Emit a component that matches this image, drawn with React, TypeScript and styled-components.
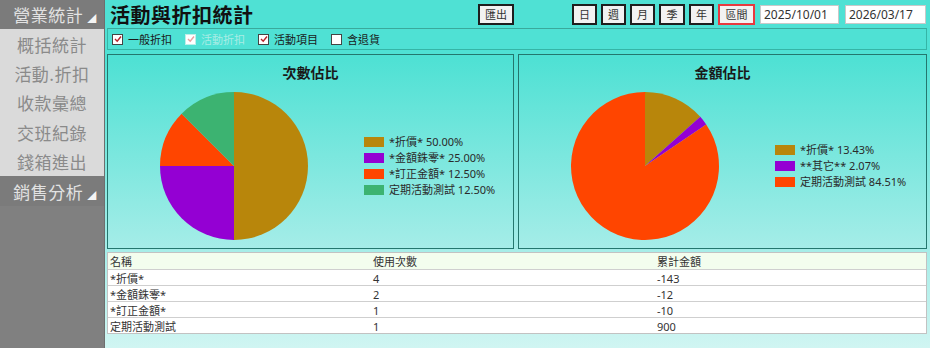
import styled, { createGlobalStyle } from "styled-components"

const GlobalStyle = createGlobalStyle`
  html, body {
    margin: 0;
    padding: 0;
    overflow: hidden;
  }
  body {
    font-family: "Noto Sans", "Noto Sans CJK TC", sans-serif;
  }
`

interface Slice {
  label: string
  value: number
  color: string
}

const countSlices: Slice[] = [
  { label: "*折價* 50.00%", value: 50, color: "#b8860b" },
  { label: "*金額銖零* 25.00%", value: 25, color: "#9400d3" },
  { label: "*訂正金額* 12.50%", value: 12.5, color: "#ff4500" },
  { label: "定期活動測試 12.50%", value: 12.5, color: "#3cb371" },
]

const amountSlices: Slice[] = [
  { label: "*折價* 13.43%", value: 13.43, color: "#b8860b" },
  { label: "**其它** 2.07%", value: 2.07, color: "#9400d3" },
  { label: "定期活動測試 84.51%", value: 84.51, color: "#ff4500" },
]

const rows = [
  { name: "*折價*", count: "4", total: "-143" },
  { name: "*金額銖零*", count: "2", total: "-12" },
  { name: "*訂正金額*", count: "1", total: "-10" },
  { name: "定期活動測試", count: "1", total: "900" },
]

const menu = [
  { text: "營業統計", head: true },
  { text: "概括統計" },
  { text: "活動.折扣" },
  { text: "收款彙總" },
  { text: "交班紀錄" },
  { text: "錢箱進出" },
  { text: "銷售分析", head: true },
]

const periods = ["日", "週", "月", "季", "年"]

const Page = styled.div`
  display: flex;
  width: 930px;
  height: 348px;
`

const Sidebar = styled.div`
  width: 104px;
  flex-shrink: 0;
  background: #808080;
  border-right: 1px solid #6e6e6e;
  display: flex;
  flex-direction: column;
`

const MenuItem = styled.div<{ $head?: boolean }>`
  height: 29.4px;
  display: flex;
  align-items: center;
  justify-content: center;
  gap: 4px;
  font-family: "Noto Sans CJK TC", sans-serif;
  font-size: 17px;
  letter-spacing: 0.5px;
  background: ${(p) => (p.$head ? "#7b7b7b" : "#dadada")};
  color: ${(p) => (p.$head ? "#e2e2e2" : "#8a8a8a")};
  padding-left: ${(p) => (p.$head ? "6px" : "0")};
`

const Corner = styled.span`
  font-size: 9px;
  color: #f4f4f4;
  margin-top: 8px;
`

const Main = styled.div`
  flex: 1;
  min-width: 0;
  display: flex;
  flex-direction: column;
  background: linear-gradient(
    to bottom,
    #4fe1d4 0px,
    #4fe1d4 60px,
    #a6ede8 250px,
    #d0f5f2 348px
  );
`

const Header = styled.div`
  height: 28px;
  display: flex;
  align-items: center;
  padding: 0 4px 0 5px;
`

const Title = styled.h1`
  margin: 0;
  font-family: "Noto Sans CJK TC", sans-serif;
  font-size: 20px;
  font-weight: 700;
  color: #111;
  letter-spacing: 0.5px;
  width: 368px;
`

const Btn = styled.button<{ $active?: boolean; $w: number }>`
  width: ${(p) => p.$w}px;
  height: 21px;
  padding: 0;
  margin-right: 4px;
  background: #f2f2f2;
  border: 2px solid ${(p) => (p.$active ? "#e8393f" : "#1e1e1e")};
  font-family: "Noto Sans CJK TC", sans-serif;
  font-size: 11px;
  color: #333;
  line-height: 14px;
`

const Spacer = styled.div`
  flex: 1;
`

const DateInput = styled.div<{ $w: number; $gap: number }>`
  width: ${(p) => p.$w}px;
  height: 19px;
  margin-left: ${(p) => p.$gap}px;
  box-sizing: border-box;
  background: #fff;
  border: 1px solid #c9c9c9;
  font-size: 12px;
  color: #333;
  padding-left: 3px;
  line-height: 17px;
`

const FilterBar = styled.div`
  height: 20px;
  margin: 0 3px 0 2px;
  border: 1px solid #35b5a6;
  border-top-color: #3aa99c;
  display: flex;
  align-items: center;
  padding-left: 4px;
`

const Check = styled.label<{ $disabled?: boolean }>`
  width: 73px;
  display: flex;
  align-items: center;
  gap: 5px;
  font-family: "Noto Sans CJK TC", sans-serif;
  font-size: 11px;
  color: ${(p) => (p.$disabled ? "#a9ece4" : "#1a1a1a")};
`

const Box = styled.span<{ $disabled?: boolean }>`
  width: 9px;
  height: 9px;
  background: #fff;
  border: 1px solid ${(p) => (p.$disabled ? "#bfeee8" : "#444")};
  display: flex;
  align-items: center;
  justify-content: center;
`

const Charts = styled.div`
  display: grid;
  grid-template-columns: 407px 1fr;
  gap: 4px;
  margin: 4px 3px 0 2px;
  height: 195px;
`

const Panel = styled.div`
  border: 1px solid #24776e;
  display: flex;
  flex-direction: column;
`

const PanelTitle = styled.div`
  height: 34px;
  display: flex;
  align-items: center;
  justify-content: center;
  font-family: "Noto Sans CJK TC", sans-serif;
  font-size: 14px;
  font-weight: 700;
  color: #1a1a1a;
`

const ChartBody = styled.div`
  flex: 1;
  display: flex;
  align-items: center;
  padding-left: 51px;
  padding-bottom: 6px;
`

const Legend = styled.div`
  margin-left: 55px;
  display: flex;
  flex-direction: column;
  gap: 6px;
`

const LegendRow = styled.div`
  display: flex;
  align-items: center;
  gap: 5px;
  font-family: "Noto Sans", "Noto Sans CJK TC", sans-serif;
  font-size: 11px;
  line-height: 10px;
  color: #2a2a2a;
`

const Swatch = styled.span<{ $color: string }>`
  width: 20px;
  height: 10px;
  background: ${(p) => p.$color};
`

const Table = styled.div`
  margin: 3px 3px 0 2px;
  border: 1px solid #c2c2c2;
  background: #fff;
`

const Row = styled.div<{ $head?: boolean }>`
  display: grid;
  grid-template-columns: 263px 284px 1fr;
  height: 16px;
  box-sizing: border-box;
  align-items: center;
  background: ${(p) => (p.$head ? "#f3fdee" : "#fff")};
  border-top: ${(p) => (p.$head ? "none" : "1px solid #cfcfcf")};
  font-family: "Noto Sans", "Noto Sans CJK TC", sans-serif;
  font-size: 11px;
  color: #333;
  padding-left: 2px;
`

function slicePath(cx: number, cy: number, r: number, a0: number, a1: number) {
  const toXY = (a: number) => {
    const rad = ((a - 90) * Math.PI) / 180
    return [cx + r * Math.cos(rad), cy + r * Math.sin(rad)]
  }
  const [x0, y0] = toXY(a0)
  const [x1, y1] = toXY(a1)
  const large = a1 - a0 > 180 ? 1 : 0
  return `M${cx},${cy} L${x0},${y0} A${r},${r} 0 ${large} 1 ${x1},${y1} Z`
}

const Pie = ({ slices }: { slices: Slice[] }) => {
  const total = slices.reduce((s, x) => s + x.value, 0)
  let angle = 0
  return (
    <svg width="150" height="150" viewBox="0 0 150 150">
      {slices.map((s) => {
        const a0 = angle
        angle += (s.value / total) * 360
        return <path key={s.label} d={slicePath(75, 75, 74, a0, angle)} fill={s.color} />
      })}
    </svg>
  )
}

const ChartPanel = ({ title, slices }: { title: string; slices: Slice[] }) => (
  <Panel>
    <PanelTitle>{title}</PanelTitle>
    <ChartBody>
      <Pie slices={slices} />
      <Legend>
        {slices.map((s) => (
          <LegendRow key={s.label}>
            <Swatch $color={s.color} />
            {s.label}
          </LegendRow>
        ))}
      </Legend>
    </ChartBody>
  </Panel>
)

const CheckItem = ({ text, checked, disabled }: { text: string; checked?: boolean; disabled?: boolean }) => (
  <Check $disabled={disabled}>
    <Box $disabled={disabled}>
      {checked && (
        <svg width="8" height="8" viewBox="0 0 8 8">
          <path
            d="M1 4 L3.2 6.2 L7 1.5"
            fill="none"
            stroke={disabled ? "#e8a0a0" : "#b8232a"}
            strokeWidth="1.4"
          />
        </svg>
      )}
    </Box>
    {text}
  </Check>
)

const App = () => {
  return (
    <Page>
      <GlobalStyle />
      <Sidebar>
        {menu.map((m) => (
          <MenuItem key={m.text} $head={m.head}>
            {m.text}
            {m.head && <Corner>◢</Corner>}
          </MenuItem>
        ))}
      </Sidebar>
      <Main>
        <Header>
          <Title>活動與折扣統計</Title>
          <Btn $w={36}>匯出</Btn>
          <Spacer />
          {periods.map((p, i) => (
            <Btn key={p} $w={i === 3 ? 26 : 25}>
              {p}
            </Btn>
          ))}
          <Btn $w={37} $active>
            區間
          </Btn>
          <DateInput $w={79} $gap={1}>2025/10/01</DateInput>
          <DateInput $w={81} $gap={6}>2026/03/17</DateInput>
        </Header>
        <FilterBar>
          <CheckItem text="一般折扣" checked />
          <CheckItem text="活動折扣" checked disabled />
          <CheckItem text="活動項目" checked />
          <CheckItem text="含退貨" />
        </FilterBar>
        <Charts>
          <ChartPanel title="次數佔比" slices={countSlices} />
          <ChartPanel title="金額佔比" slices={amountSlices} />
        </Charts>
        <Table>
          <Row $head>
            <span>名稱</span>
            <span>使用次數</span>
            <span>累計金額</span>
          </Row>
          {rows.map((r) => (
            <Row key={r.name}>
              <span>{r.name}</span>
              <span>{r.count}</span>
              <span>{r.total}</span>
            </Row>
          ))}
        </Table>
      </Main>
    </Page>
  )
}

export default App
